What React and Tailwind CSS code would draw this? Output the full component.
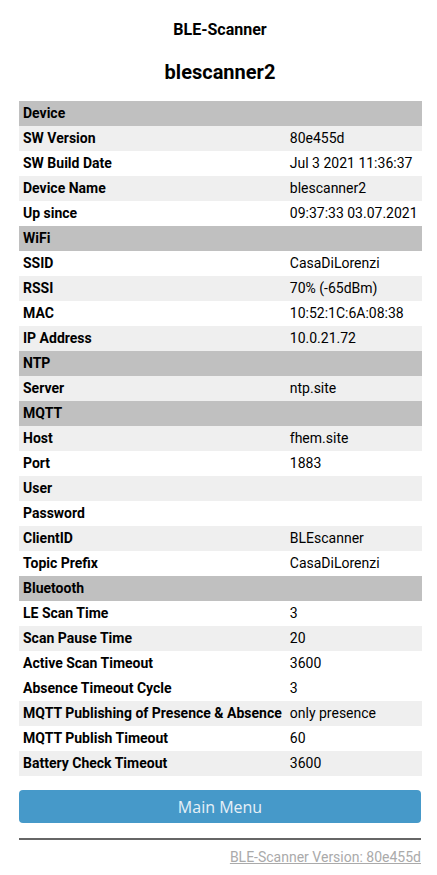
const rows = [
    { head: "Device" },
    { k: "SW Version", v: "80e455d", g: true },
    { k: "SW Build Date", v: "Jul 3 2021 11:36:37" },
    { k: "Device Name", v: "blescanner2", g: true },
    { k: "Up since", v: "09:37:33 03.07.2021" },
    { head: "WiFi" },
    { k: "SSID", v: "CasaDiLorenzi" },
    { k: "RSSI", v: "70% (-65dBm)", g: true },
    { k: "MAC", v: "10:52:1C:6A:08:38" },
    { k: "IP Address", v: "10.0.21.72", g: true },
    { head: "NTP" },
    { k: "Server", v: "ntp.site", g: true },
    { head: "MQTT" },
    { k: "Host", v: "fhem.site", g: true },
    { k: "Port", v: "1883" },
    { k: "User", v: "", g: true },
    { k: "Password", v: "" },
    { k: "ClientID", v: "BLEscanner", g: true },
    { k: "Topic Prefix", v: "CasaDiLorenzi" },
    { head: "Bluetooth" },
    { k: "LE Scan Time", v: "3" },
    { k: "Scan Pause Time", v: "20", g: true },
    { k: "Active Scan Timeout", v: "3600" },
    { k: "Absence Timeout Cycle", v: "3" },
    { k: "MQTT Publishing of Presence & Absence", v: "only presence", g: true },
    { k: "MQTT Publish Timeout", v: "60" },
    { k: "Battery Check Timeout", v: "3600", g: true },
];

const App = () => {
    return (
        <div className="min-h-screen bg-white pl-[19px] pr-[16px] pt-[20px] font-['Roboto',sans-serif] text-[14px] text-black">
            <div className="text-center text-[16px] font-bold leading-[20px]">
                BLE-Scanner
            </div>
            <h1 className="mt-[19px] text-center text-[20px] font-bold leading-[26px]">
                blescanner2
            </h1>
            <table className="mt-[16px] w-full border-collapse">
                <tbody>
                    {rows.map((r, i) =>
                        r.head ? (
                            <tr key={i} className="h-[25px] bg-[#c0c0c0]">
                                <td colSpan={2} className="px-[4px] font-bold leading-[25px]">
                                    {r.head}
                                </td>
                            </tr>
                        ) : (
                            <tr key={i} className={r.g ? "h-[25px] bg-[#efefef]" : "h-[25px] bg-white"}>
                                <td className="w-[267px] px-[4px] font-bold leading-[25px] whitespace-nowrap">
                                    {r.k}
                                </td>
                                <td className="px-[4px] leading-[25px] whitespace-nowrap">
                                    {r.v}
                                </td>
                            </tr>
                        )
                    )}
                </tbody>
            </table>
            <button className="mt-[14px] block h-[33px] w-full rounded-[4px] bg-[#4699c9] font-['Open_Sans',sans-serif] text-[16px] text-[#e6f0f7]">
                Main Menu
            </button>
            <hr className="mt-[15px] border-t-2 border-[#666]" />
            <div className="mt-[7px] text-right">
                <a className="text-[14px] text-[#aaa] underline">
                    BLE-Scanner Version: 80e455d
                </a>
            </div>
        </div>
    );
};

export default App;
